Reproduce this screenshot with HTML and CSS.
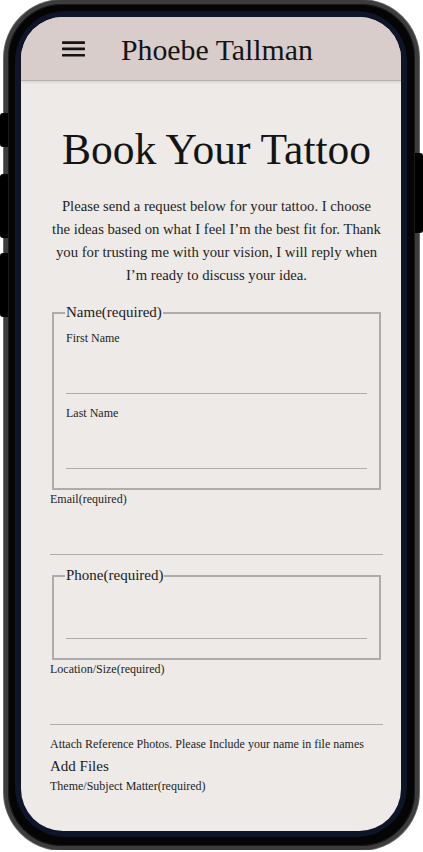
FILE: index.html
```html
<!DOCTYPE html>
<html lang="en">
<head>
<meta charset="utf-8">
<title>Book Your Tattoo - Phoebe Tallman</title>
<link rel="stylesheet" href="styles.css">
</head>
<body>
<div class="device">
  <span class="side-btn side-l1"></span>
  <span class="side-btn side-l2"></span>
  <span class="side-btn side-l3"></span>
  <span class="side-btn side-r1"></span>
  <div class="bezel">
    <div class="screen">
      <header class="topbar">
        <svg class="menu-icon" width="23" height="16" viewBox="0 0 23 16" aria-hidden="true">
          <rect x="0" y="0.3" width="23" height="2.6" rx="0.6"/>
          <rect x="0" y="6.6" width="23" height="2.6" rx="0.6"/>
          <rect x="0" y="13" width="23" height="2.6" rx="0.6"/>
        </svg>
        <span class="brand">Phoebe Tallman</span>
      </header>
      <main class="content">
        <h1 class="title">Book Your Tattoo</h1>
        <p class="intro">Please send a request below for your tattoo. I choose<br>the ideas based on what I feel I’m the best fit for. Thank<br>you for trusting me with your vision, I will reply when<br>I’m ready to discuss your idea.</p>
        <form class="booking">
          <fieldset class="group">
            <legend>Name(required)</legend>
            <label class="field-label">First Name</label>
            <input class="line-input" type="text">
            <label class="field-label">Last Name</label>
            <input class="line-input" type="text">
          </fieldset>
          <label class="field-label">Email(required)</label>
          <input class="line-input" type="email">
          <fieldset class="group group-phone">
            <legend>Phone(required)</legend>
            <input class="line-input" type="tel">
          </fieldset>
          <label class="field-label">Location/Size(required)</label>
          <input class="line-input" type="text">
          <label class="field-label">Attach Reference Photos. Please Include your name in file names</label>
          <span class="add-files">Add Files</span>
          <label class="field-label">Theme/Subject Matter(required)</label>
        </form>
      </main>
    </div>
  </div>
</div>
</body>
</html>
```

FILE: styles.css
```css
* { box-sizing: border-box; }

html, body {
  margin: 0;
  padding: 0;
  background: #ffffff;
  font-family: "Liberation Serif", "DejaVu Serif", serif;
  color: #1b1b1b;
}

.device {
  position: relative;
  margin-left: 4px;
  width: 415px;
  height: 850px;
  border-radius: 58px;
  border: 4px solid #3c3c3c;
  background: #050505;
  padding: 7px 8px 9px 7px;
  box-shadow: inset 0 0 0 1px #1a1a1a, 0 0 0 1px #6a6a6a;
}

.side-btn {
  position: absolute;
  width: 8px;
  background: #000;
}
.side-l1 { left: -8px; top: 109px; height: 34px; border-radius: 3px 0 0 3px; }
.side-l2 { left: -8px; top: 170px; height: 64px; border-radius: 3px 0 0 3px; }
.side-l3 { left: -8px; top: 249px; height: 64px; border-radius: 3px 0 0 3px; }
.side-r1 { right: -8px; top: 149px; height: 80px; border-radius: 0 3px 3px 0; }

.bezel {
  height: 100%;
  border-radius: 50px;
  background: #0e1528;
  padding: 6px;
}

.screen {
  height: 100%;
  border-radius: 42px;
  overflow: hidden;
  background: #edeae7;
}

.topbar {
  height: 63px;
  display: flex;
  align-items: center;
  gap: 36px;
  padding: 3px 0 0 41px;
  background: #d8cdcb;
  box-shadow: 0 1px 0 #b9b1ae, 0 2px 3px rgba(0, 0, 0, 0.12);
  position: relative;
}

.menu-icon {
  display: block;
  fill: #141414;
  margin-top: -2px;
}

.brand {
  font-size: 29.8px;
  line-height: 1;
  color: #141414;
}

.content {
  padding: 0 18px 0 29px;
}

.title {
  margin: 43px 0 0;
  font-size: 43.5px;
  font-weight: normal;
  line-height: 52px;
  text-align: center;
  color: #141414;
}

.intro {
  margin: 20px 0 0;
  font-size: 14.7px;
  line-height: 23px;
  text-align: center;
  color: #1e1e1e;
}

.booking {
  margin-top: 17px;
  display: flex;
  flex-direction: column;
}

.group {
  margin: 0 2px;
  padding: 8px 12px 9px;
  border: 2px solid #aeacaa;
  font-size: 16px;
  min-width: 0;
}

.group-phone {
  margin-top: 2px;
}

.group legend {
  font-size: 15px;
  padding: 0 1px;
  margin-left: -1px;
  line-height: 17px;
  color: #1b1b1b;
}

.field-label {
  display: block;
  font-size: 12px;
  line-height: 18px;
  color: #1e1e1e;
}

.line-input {
  display: block;
  width: 100%;
  height: 47px;
  margin: 0 0 10px;
  padding: 0;
  border: 0;
  border-bottom: 1px solid #aeadab;
  background: transparent;
  font: inherit;
  outline: none;
}

.add-files {
  display: block;
  font-size: 15px;
  line-height: 22px;
  margin-top: 2px;
  color: #1b1b1b;
}
```
